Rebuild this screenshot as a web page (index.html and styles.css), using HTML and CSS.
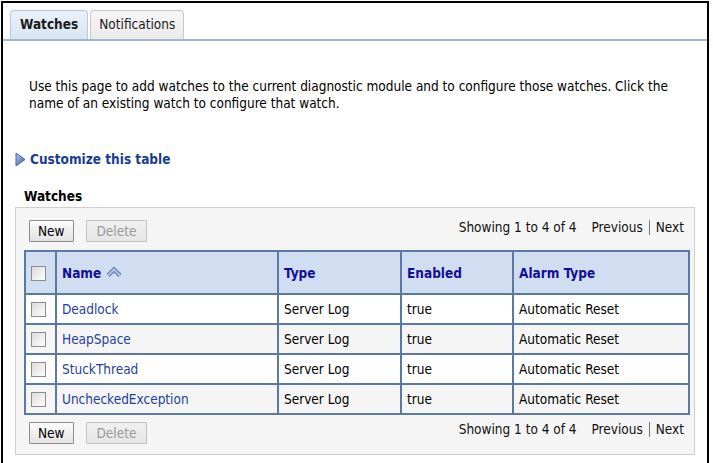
FILE: index.html
```html
<!DOCTYPE html>
<html>
<head>
<meta charset="utf-8">
<link rel="stylesheet" href="styles.css">
</head>
<body>
<div class="frame">
  <div class="tabbar">
    <div class="tab active">Watches</div>
    <div class="tab">Notifications</div>
  </div>
  <p class="intro">Use this page to add watches to the current diagnostic module and to configure those watches. Click the name of an existing watch to configure that watch.</p>
  <div class="customize">
    <svg class="tri" width="11" height="15" viewBox="0 0 11 15"><defs><linearGradient id="g" x1="0" y1="0" x2="1" y2="1"><stop offset="0" stop-color="#b8c8e8"/><stop offset="1" stop-color="#3a5aa8"/></linearGradient></defs><path d="M1 1 L10 7.5 L1 14 Z" fill="url(#g)" stroke="#4a64a8" stroke-width="1"/></svg>
    <span>Customize this table</span>
  </div>
  <div class="heading">Watches</div>
  <div class="panel">
    <div class="toolbar">
      <div class="buttons">
        <button class="btn">New</button>
        <button class="btn disabled">Delete</button>
      </div>
      <div class="paging">Showing 1 to 4 of 4 <span class="pl">Previous</span><span class="sep"></span><span class="nl">Next</span></div>
    </div>
    <table class="grid">
      <colgroup><col class="c0"><col class="c1"><col class="c2"><col class="c3"><col class="c4"></colgroup>
      <thead>
        <tr><th><span class="cb"></span></th><th>Name <svg class="sort" width="18" height="12" viewBox="0 0 18 12"><path d="M3 9.5 L9 3.5 L15 9.5" fill="none" stroke="#5f7caa" stroke-width="4.4" stroke-linejoin="miter"/><path d="M3 9.5 L9 3.5 L15 9.5" fill="none" stroke="#b3c5e2" stroke-width="2"/></svg></th><th>Type</th><th>Enabled</th><th>Alarm Type</th></tr>
      </thead>
      <tbody>
        <tr><td><span class="cb"></span></td><td><a>Deadlock</a></td><td>Server Log</td><td>true</td><td>Automatic Reset</td></tr>
        <tr class="alt"><td><span class="cb"></span></td><td><a>HeapSpace</a></td><td>Server Log</td><td>true</td><td>Automatic Reset</td></tr>
        <tr><td><span class="cb"></span></td><td><a>StuckThread</a></td><td>Server Log</td><td>true</td><td>Automatic Reset</td></tr>
        <tr class="alt"><td><span class="cb"></span></td><td><a>UncheckedException</a></td><td>Server Log</td><td>true</td><td>Automatic Reset</td></tr>
      </tbody>
    </table>
    <div class="toolbar bottom">
      <div class="buttons">
        <button class="btn">New</button>
        <button class="btn disabled">Delete</button>
      </div>
      <div class="paging">Showing 1 to 4 of 4 <span class="pl">Previous</span><span class="sep"></span><span class="nl">Next</span></div>
    </div>
  </div>
</div>
</body>
</html>
```
FILE: styles.css
```css
html, body { margin: 0; padding: 0; background: #fff; }
body {
  font-family: "DejaVu Sans Condensed", "DejaVu Sans", sans-serif;
  font-size: 13.5px;
  color: #000;
}
.frame {
  margin: 1px 4px 0 1px;
  border: 2px solid #000;
  border-bottom: none;
  height: 462px;
  box-sizing: border-box;
  padding-top: 7px;
}
.tabbar {
  display: flex;
  gap: 2px;
  padding-left: 7px;
  border-bottom: 2px solid #9fb5d9;
  height: 29px;
  align-items: flex-end;
}
.tab {
  height: 29px;
  box-sizing: border-box;
  padding: 0 8px;
  line-height: 27px;
  border: 1px solid #c8c8c8;
  border-bottom: none;
  border-radius: 4px 4px 0 0;
  background: linear-gradient(#f6f6f6, #ebebeb);
  color: #1a1a1a;
}
.tab.active {
  font-weight: bold;
  border-color: #b7c9e2;
  background: linear-gradient(#eaf1fa, #d9e5f3);
  padding: 0 9px;
}
.intro {
  margin: 37px 30px 0 26px;
  line-height: 17px;
}
.customize {
  display: flex;
  align-items: center;
  gap: 4px;
  margin: 39px 0 0 12px;
  font-weight: bold;
  color: #173e94;
  font-size: 13.5px;
}
.tri { display: block; }
.heading {
  margin: 20px 0 0 21px;
  font-weight: bold;
  font-size: 13.5px;
  height: 18px;
  line-height: 18px;
}
.panel {
  margin: 2px 0 0 12px;
  width: 680px;
  height: 248px;
  box-sizing: border-box;
  border: 1px solid #cfcfcf;
  background: #f5f5f5;
  padding: 0 6px 0 8px;
}
.toolbar {
  display: flex;
  justify-content: space-between;
  align-items: flex-start;
  padding: 12px 0 0 5px;
  height: 30px;
  box-sizing: border-box;
  margin-bottom: 12px;
}
.toolbar.bottom { padding-top: 7px; margin-bottom: 0; }
.buttons { display: flex; gap: 12px; }
.btn {
  font-family: inherit;
  font-size: 13.5px;
  height: 22px;
  padding: 0 8px;
  border: 1px solid #8d8d8d;
  background: linear-gradient(#fbfbfb, #e3e3e3);
  color: #000;
  border-radius: 1px;
}
.btn.disabled {
  color: #9a9a9a;
  border-color: #c2c2c2;
  background: linear-gradient(#f0f0f0, #e6e6e6);
  padding: 0 10px;
}
.paging {
  padding-top: 0;
  margin-right: 4px;
  white-space: nowrap;
  line-height: 14px;
  color: #111;
}
.pl { margin-left: 11px; }
.sep {
  display: inline-block;
  width: 1px;
  height: 15px;
  background: #777;
  margin: 0 6px 0 6px;
  vertical-align: -3px;
}
.grid {
  border-collapse: collapse;
  width: 664px;
  table-layout: fixed;
}
.c0 { width: 31px; }
.c1 { width: 222px; }
.c2 { width: 123px; }
.c3 { width: 112px; }
.c4 { width: 176px; }
.grid th, .grid td {
  border: 2px solid #5b7aa3;
  text-align: left;
  padding: 0 0 0 5px;
  white-space: nowrap;
}
.grid th {
  height: 41px;
  background: #d1def1;
  color: #120f96;
  font-weight: bold;
}
.grid td {
  height: 28px;
  background: #fff;
  color: #000;
}
.grid tr.alt td { background: #f5f5f5; }
.grid a { color: #1e3f9e; text-decoration: none; }
.cb {
  display: inline-block;
  width: 13px;
  height: 13px;
  border: 1px solid #8c8c8c;
  background: linear-gradient(135deg, #dcdcdc, #fdfdfd);
  vertical-align: middle;
}
.sort { vertical-align: 0px; margin-left: 0px; }
```
